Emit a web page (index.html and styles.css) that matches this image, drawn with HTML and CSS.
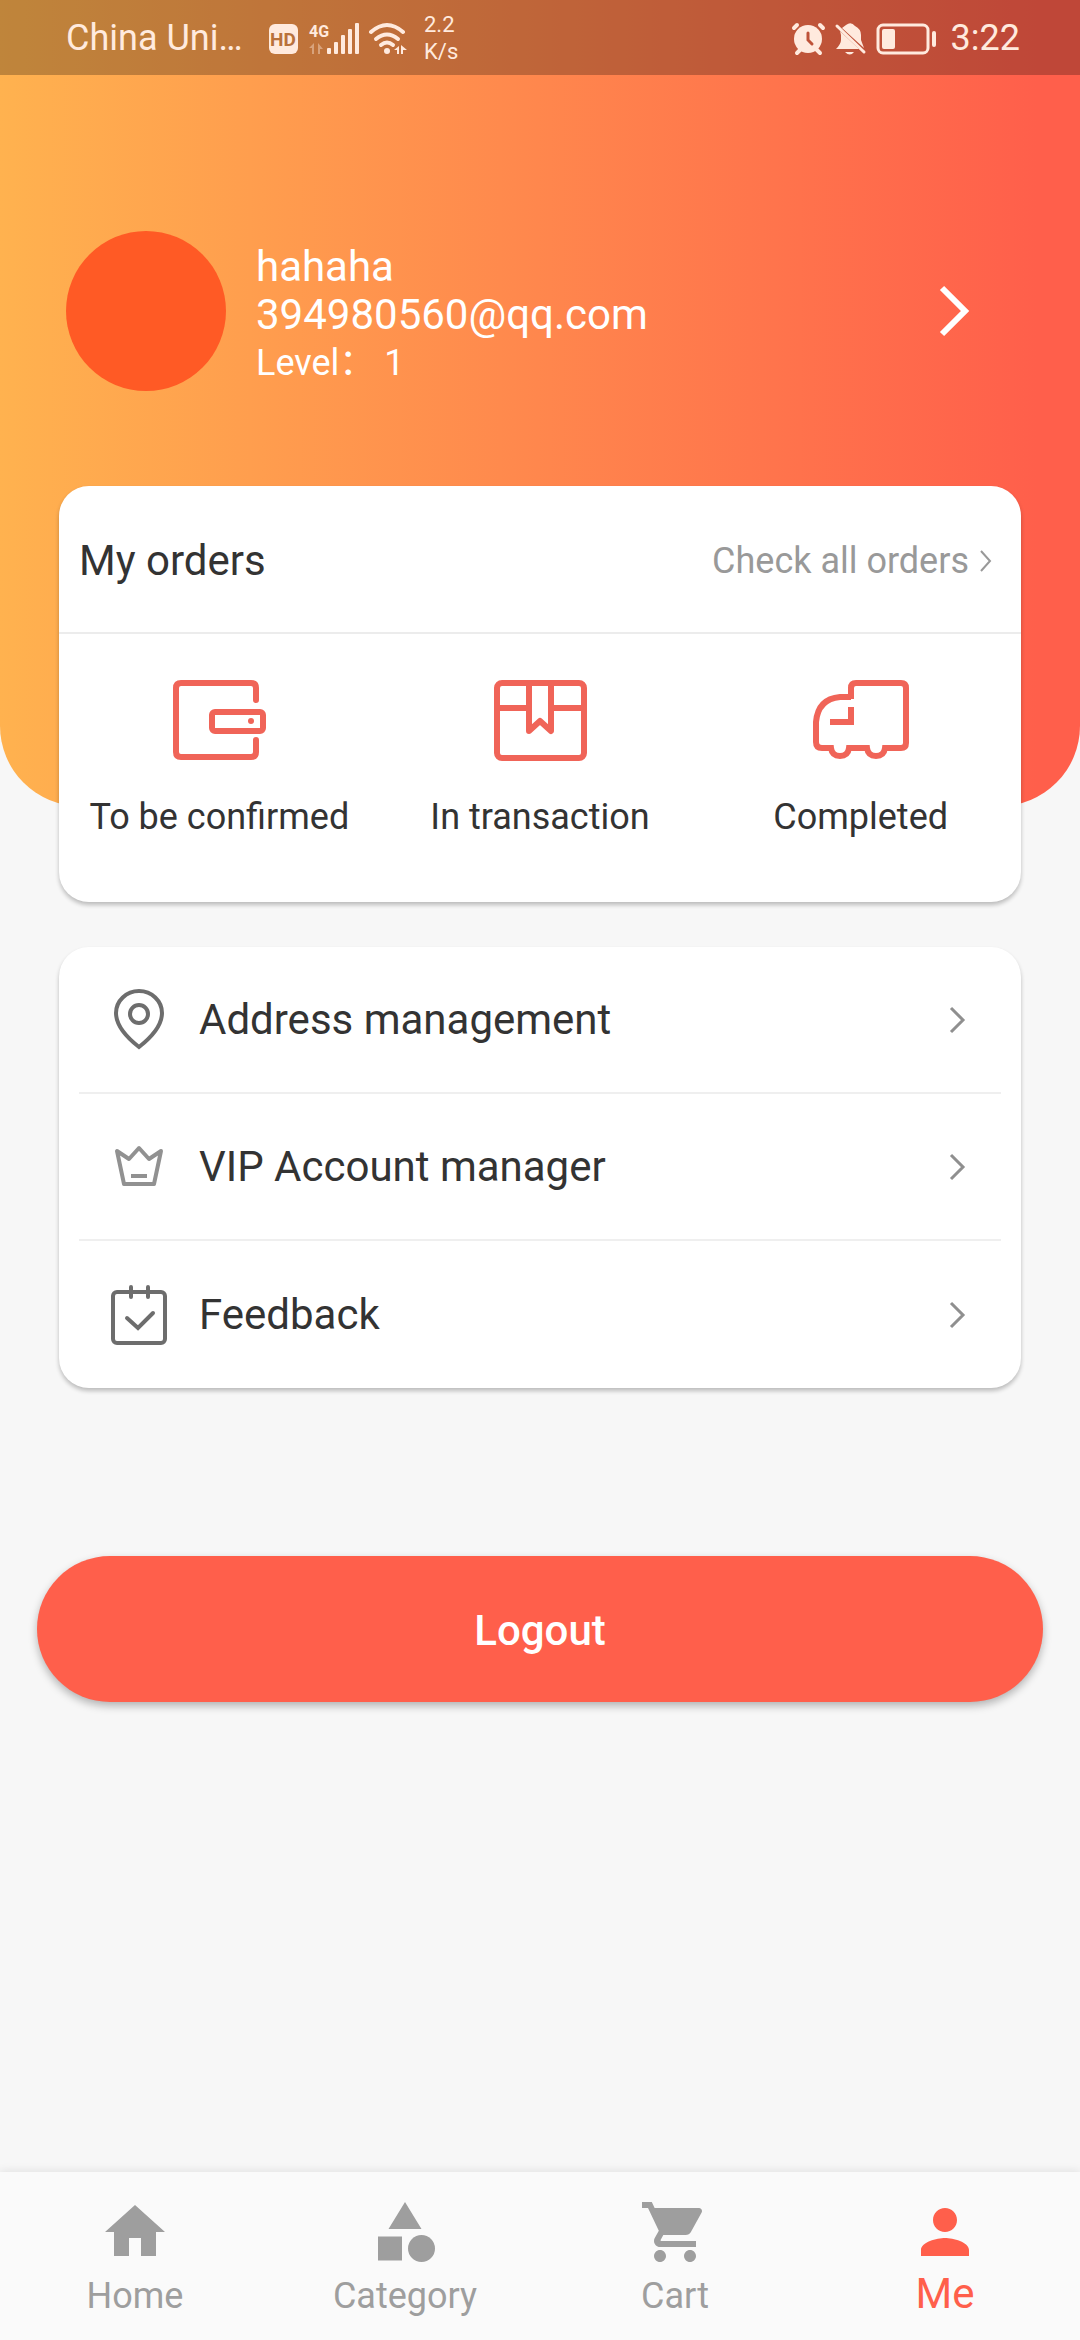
FILE: index.html
```html
<!DOCTYPE html>
<html lang="en">
<head>
<meta charset="utf-8">
<meta name="viewport" content="width=device-width, initial-scale=1">
<title>Me</title>
<link rel="stylesheet" href="styles.css">
</head>
<body>
<div class="screen">
  <header class="hero">
    <div class="status">
      <div class="status-group">
        <span class="carrier">China Uni…</span>
        <svg class="status-icons" width="140" height="36" viewBox="0 0 140 36" fill="currentColor" aria-hidden="true">
          <rect x="1" y="4" width="29" height="30" rx="6"/>
          <text class="hd" x="15" y="26" text-anchor="middle">HD</text>
          <text class="net" x="41" y="17">4G</text>
          <g opacity=".4"><path d="M46 23v11h-2v-6h-3z"/><path d="M50 34V23l5 6h-3v5z"/></g>
          <rect x="59" y="28" width="4" height="6" rx="1"/>
          <rect x="66" y="22" width="4" height="12" rx="1"/>
          <rect x="73" y="15" width="4" height="19" rx="1"/>
          <rect x="80" y="9" width="4" height="25" rx="1"/>
          <rect x="87" y="3" width="4" height="31" rx="1"/>
          <g fill="none" stroke="currentColor" stroke-width="4" stroke-linecap="round">
            <path d="M103 12q16-14 32 0"/><path d="M108 19q11-9 22 0"/><path d="M113 25q6-5 12 0"/>
          </g>
          <circle cx="119" cy="31" r="3"/>
          <path d="M131 26v8h-2v-4h-3zM133 34v-9l6 5h-4v4z"/>
        </svg>
        <span class="speed">2.2<br>K/s</span>
      </div>
      <div class="status-group">
        <svg class="status-icons" width="148" height="36" viewBox="0 0 148 36" fill="currentColor" aria-hidden="true">
          <g stroke="currentColor" stroke-width="4" stroke-linecap="round">
            <path d="M3 8l3-3M32 8l-3-3M6 33l4-4M29 33l-4-4"/>
          </g>
          <circle cx="17" cy="19" r="14"/>
          <path class="cut" d="M17 13v7l4 4"/>
          <path d="M55 5q5-4 9 1q6 3 6 9v5l3 8L51 8zM49 11l19 18H45q5-5 5-9v-5zM54 32h9q-4 5-9 0z"/>
          <path d="M46 6l27 26" stroke="currentColor" stroke-width="3" stroke-linecap="round"/>
          <rect x="87" y="5" width="50" height="28" rx="5" fill="none" stroke="currentColor" stroke-width="3"/>
          <rect x="91" y="9" width="13" height="20" rx="2"/>
          <rect x="141" y="11" width="4" height="16" rx="2"/>
        </svg>
        <span class="clock">3:22</span>
      </div>
    </div>
    <a class="profile" href="#profile">
      <span class="avatar"></span>
      <span class="profile-text">
        <span>hahaha</span>
        <span>394980560@qq.com</span>
        <span class="level">Level： 1</span>
      </span>
      <svg class="profile-arrow" width="34" height="52" viewBox="0 0 34 52" fill="none" stroke="currentColor" stroke-width="6" aria-hidden="true"><path d="M4 3l23 23L4 49"/></svg>
    </a>
  </header>

  <main>
    <section class="card orders">
      <div class="orders-head">
        <h2>My orders</h2>
        <a class="all-orders" href="#orders">Check all orders
          <svg width="14" height="24" viewBox="0 0 14 24" fill="none" stroke="currentColor" stroke-width="2" aria-hidden="true"><path d="M2 2l9 10-9 10"/></svg>
        </a>
      </div>
      <div class="order-types">
        <a href="#confirm">
          <svg width="96" height="84" viewBox="0 0 96 84" fill="none" stroke="currentColor" stroke-width="6" stroke-linecap="round" aria-hidden="true">
            <path d="M85 21V9q0-5-5-5H10Q5 4 5 9v64q0 5 5 5h70q5 0 5-5V61"/>
            <rect x="41" y="33" width="51" height="19" rx="3"/>
            <circle cx="80" cy="42" r="3" fill="currentColor" stroke="none"/>
          </svg>
          <span>To be confirmed</span>
        </a>
        <a href="#transaction">
          <svg width="96" height="84" viewBox="0 0 96 84" fill="none" stroke="currentColor" stroke-width="6" stroke-linejoin="round" aria-hidden="true">
            <rect x="5" y="4" width="87" height="75" rx="5"/>
            <path d="M5 29h32M60 29h32M37 4v48l11-10 11 10V4"/>
          </svg>
          <span>In transaction</span>
        </a>
        <a href="#completed">
          <svg width="96" height="84" viewBox="0 0 96 84" fill="none" stroke="currentColor" stroke-width="6" aria-hidden="true">
            <path d="M38 20V9q0-5 5-5h45q5 0 5 5v55q0 5-5 5H72q-1 8-9 8t-9-8H36q-1 8-9 8t-9-8H9q-6 0-6-6V43Q5 20 27 18h11"/>
            <path d="M38 28v15H17"/>
          </svg>
          <span>Completed</span>
        </a>
      </div>
    </section>

    <nav class="card menu">
      <a href="#address">
        <svg width="60" height="66" viewBox="0 0 60 66" fill="none" stroke="currentColor" stroke-width="4" aria-hidden="true">
          <path d="M30 60Q7 42 7 26a23 22 0 0 1 46 0q0 16-23 34z"/><circle cx="30" cy="27" r="9"/>
        </svg>
        <span>Address management</span>
        <svg class="arrow" width="24" height="30" viewBox="0 0 24 30" aria-hidden="true"><path d="M4 3l12 12L4 27"/></svg>
      </a>
      <a href="#vip">
        <svg class="crown" width="60" height="66" viewBox="0 0 60 66" fill="none" stroke="currentColor" stroke-width="4" stroke-linejoin="round" aria-hidden="true">
          <path d="M15 50h30l7-33-12 8-10-11-10 11-12-8z"/><path d="M22 42h16"/>
        </svg>
        <span>VIP Account manager</span>
        <svg class="arrow" width="24" height="30" viewBox="0 0 24 30" aria-hidden="true"><path d="M4 3l12 12L4 27"/></svg>
      </a>
      <a href="#feedback">
        <svg width="60" height="66" viewBox="0 0 60 66" fill="none" stroke="currentColor" stroke-width="4" stroke-linecap="round" aria-hidden="true">
          <rect x="4" y="10" width="52" height="51" rx="4"/><path d="M22 5v10M39 5v10M18 36l11 10 15-15"/>
        </svg>
        <span>Feedback</span>
        <svg class="arrow" width="24" height="30" viewBox="0 0 24 30" aria-hidden="true"><path d="M4 3l12 12L4 27"/></svg>
      </a>
    </nav>

    <button class="logout" type="button">Logout</button>
  </main>

  <nav class="tabs">
    <a href="#home">
      <svg width="72" height="72" viewBox="0 0 24 24" fill="currentColor" aria-hidden="true"><path d="M10 20v-6h4v6h5v-8h3L12 3 2 12h3v8z"/></svg>
      <span>Home</span>
    </a>
    <a href="#category">
      <svg width="72" height="72" viewBox="0 0 24 24" fill="currentColor" aria-hidden="true"><path d="M12 2l-5.500 9h11zM3 13.500h8v8H3z"/><circle cx="17.500" cy="17.500" r="4.500"/></svg>
      <span>Category</span>
    </a>
    <a href="#cart">
      <svg width="72" height="72" viewBox="0 0 24 24" fill="currentColor" aria-hidden="true"><path d="M7 18c-1.100 0-1.990.9-1.990 2S5.900 22 7 22s2-.9 2-2-.9-2-2-2zM1 2v2h2l3.600 7.590-1.350 2.450c-.16.28-.25.61-.25.960 0 1.100.9 2 2 2h12v-2H7.420c-.14 0-.25-.11-.25-.25l.03-.12.900-1.630h7.450c.75 0 1.410-.41 1.750-1.030l3.580-6.490c.08-.14.12-.31.12-.48 0-.55-.45-1-1-1H5.210l-.94-2H1zm16 16c-1.100 0-1.990.9-1.990 2s.89 2 1.990 2 2-.9 2-2-.9-2-2-2z"/></svg>
      <span>Cart</span>
    </a>
    <a class="active" href="#me" aria-current="page">
      <svg width="72" height="72" viewBox="0 0 24 24" fill="currentColor" aria-hidden="true"><path d="M12 12c2.210 0 4-1.790 4-4s-1.790-4-4-4-4 1.790-4 4 1.790 4 4 4zm0 2c-2.670 0-8 1.340-8 4v2h16v-2c0-2.660-5.330-4-8-4z"/></svg>
      <span>Me</span>
    </a>
  </nav>
</div>
</body>
</html>
```
FILE: styles.css
```css
* { box-sizing: border-box; }

body {
  margin: 0;
  background: #f7f7f7;
  color: #333;
  font-family: Roboto, "Noto Sans CJK SC", sans-serif;
  font-size: 42px;
  line-height: 48px;
}

a { color: inherit; text-decoration: none; }
svg { display: block; flex: none; }

.screen {
  display: flex;
  flex-direction: column;
  min-height: 100vh;
}

/* Gradient header, the first card overlaps its lower part */
.hero {
  height: 806px;
  border-radius: 0 0 80px 80px;
  overflow: hidden;
  background: linear-gradient(90deg, #ffb24f, #ff5f4b 96%);
  color: #fff;
}

.status {
  display: flex;
  justify-content: space-between;
  height: 75px;
  padding: 0 60px 0 66px;
  background: rgba(0, 0, 0, .25);
  color: #ffeade;
  font-size: 36px;
}

.status-group {
  display: flex;
  align-items: center;
}

.status-group .status-icons { margin-right: 12px; }
.carrier { width: 202px; }
.speed { margin-left: 4px; font-size: 22px; line-height: 27px; }
.hd { fill: #b9713b; font-size: 19px; font-weight: 700; }
.net { font-size: 16px; font-weight: 700; }
.cut { fill: none; stroke: #be5238; stroke-width: 3; stroke-linecap: round; }

.profile {
  display: flex;
  align-items: center;
  margin-top: 156px;
  padding: 0 108px 0 66px;
}

.avatar {
  width: 160px;
  height: 160px;
  border-radius: 50%;
  background: #ff5a25;
}

.profile-text {
  display: flex;
  flex: 1;
  flex-direction: column;
  margin-left: 30px;
  padding-top: 8px;
}

.level { font-size: 36px; }

main {
  display: flex;
  flex: 1;
  flex-direction: column;
  margin-top: -320px;
}

.card {
  margin: 0 59px;
  border-radius: 30px;
  background: #fff;
  box-shadow: 0 3px 4px rgba(0, 0, 0, .24);
}

.orders-head {
  display: flex;
  align-items: center;
  justify-content: space-between;
  height: 148px;
  padding: 4px 28px 0 20px;
  border-bottom: 2px solid #ececec;
}

.orders-head h2 { margin: 0; font-size: 42px; font-weight: 400; }

.all-orders {
  display: flex;
  align-items: center;
  gap: 10px;
  color: #999;
  font-size: 36px;
}

.order-types {
  display: grid;
  grid-template-columns: repeat(3, 1fr);
  height: 268px;
  padding-top: 45px;
  font-size: 36px;
}

.order-types a {
  display: flex;
  flex-direction: column;
  align-items: center;
  gap: 30px;
}

.order-types svg { color: #f06458; }

.menu {
  margin-top: 45px;
  padding: 0 20px;
}

.menu a {
  display: flex;
  align-items: center;
  gap: 30px;
  height: 147px;
  padding: 0 30px;
  border-bottom: 2px solid #efefef;
}

.menu a:last-child { border-bottom: 0; }
.menu span { flex: 1; }
.menu svg { color: #6d6d6d; }
.menu .crown { color: #919191; }
.menu .arrow { fill: none; stroke: #8f8f8f; stroke-width: 3; }

.logout {
  height: 146px;
  margin: 168px 37px 0;
  padding: 4px 0 0;
  border: 0;
  border-radius: 73px;
  background: #ff5f4b;
  box-shadow: 0 4px 8px rgba(0, 0, 0, .28);
  color: #fff;
  font: 500 42px/48px Roboto, "Noto Sans", sans-serif;
}

.tabs {
  display: grid;
  grid-template-columns: repeat(4, 1fr);
  height: 168px;
  padding-top: 24px;
  background: #fafafa;
  box-shadow: 0 -2px 8px rgba(0, 0, 0, .08);
  color: #9e9e9e;
  font-size: 36px;
}

.tabs a {
  display: flex;
  flex-direction: column;
  align-items: center;
  gap: 4px;
}

.tabs .active { gap: 2px; color: #ff5f4b; font-size: 42px; }
```
